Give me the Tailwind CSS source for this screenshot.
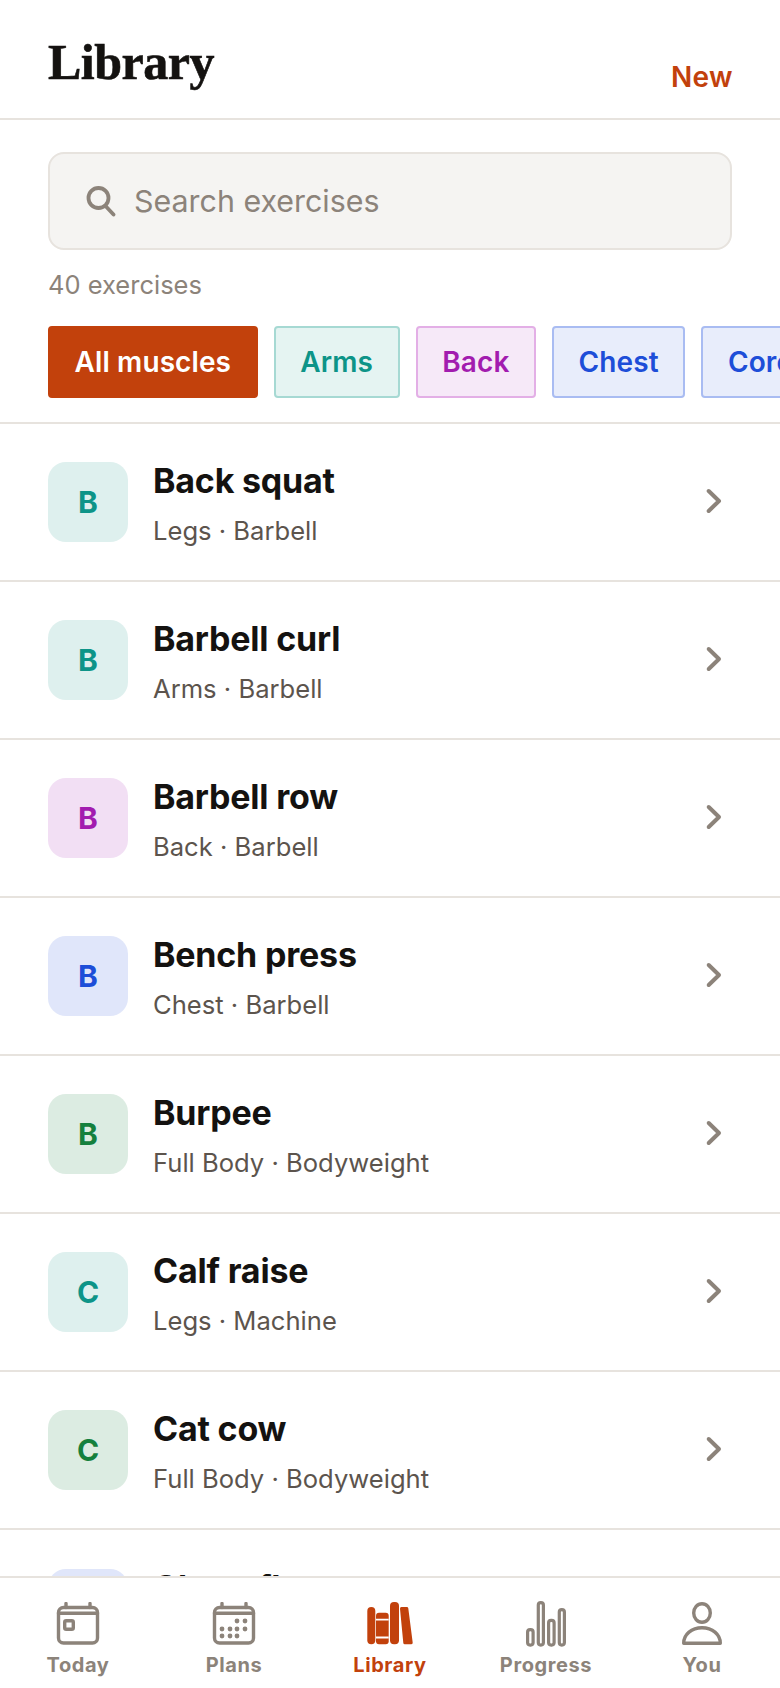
<!DOCTYPE html>
<html lang="en">
<head>
    <meta charset="UTF-8">
    <title>Library</title>
    <script src="https://cdn.jsdelivr.net/npm/@tailwindcss/browser@4"></script>
</head>
<body class="bg-white font-['Inter',sans-serif]">
    <div class="relative w-[780px] h-[1688px] overflow-hidden flex flex-col">
        <!-- header -->
        <header class="h-[120px] shrink-0 flex justify-between items-start px-12 border-b-2 border-[#e7e3de]">
            <h1 class="mt-[30px] font-['Liberation_Serif',serif] font-bold text-[50px] leading-[64px] tracking-[-0.5px] [-webkit-text-stroke:0.6px_#141210] text-[#141210]">Library</h1>
            <button class="mt-[59px] -mr-[1px] font-semibold text-[28px] leading-[36px] tracking-[0.4px] text-[#c2410c]">New</button>
        </header>

        <!-- search -->
        <div class="px-12 pt-8 shrink-0">
            <div class="h-[98px] flex items-center gap-[17px] pl-[35px] rounded-[16px] border-2 border-[#e7e3de] bg-[#f5f4f2]">
                <svg class="w-[32px] h-[32px] text-[#8c837a]" viewBox="0 0 32 32" fill="none" stroke="currentColor" stroke-width="3.800" stroke-linecap="round"><circle cx="13.500" cy="13" r="10"/><path d="M21 21.500l7.500 8"/></svg>
                <span class="text-[30.4px] pt-[1px] text-[#8c837a]">Search exercises</span>
            </div>
            <p class="mt-[18px] text-[25.5px] leading-[34px] text-[#8c837a]">40 exercises</p>
        </div>

        <!-- muscle chips -->
        <div class="flex gap-4 pl-12 mt-[24px] shrink-0 overflow-hidden">
            <span class="h-[72px] px-[24.6px] flex items-center shrink-0 rounded-[4px] border-2 border-[#c2410c] bg-[#c2410c] text-white font-semibold text-[28px] tracking-[0.1px]">All muscles</span>
            <span class="h-[72px] px-[24.6px] flex items-center shrink-0 rounded-[4px] border-2 border-[#a6d9d3] bg-[#e5f4f2] text-[#0d9488] font-semibold text-[28px] tracking-[0.1px]">Arms</span>
            <span class="h-[72px] px-[24.6px] flex items-center shrink-0 rounded-[4px] border-2 border-[#e3afe6] bg-[#f6e9f8] text-[#a21caf] font-semibold text-[28px] tracking-[0.1px]">Back</span>
            <span class="h-[72px] px-[24.6px] flex items-center shrink-0 rounded-[4px] border-2 border-[#a9bcf2] bg-[#e8edfb] text-[#1d4ed8] font-semibold text-[28px] tracking-[0.1px]">Chest</span>
            <span class="h-[72px] px-[24.6px] flex items-center shrink-0 rounded-[4px] border-2 border-[#a9bcf2] bg-[#e8edfb] text-[#1d4ed8] font-semibold text-[28px] tracking-[0.1px]">Core</span>
        </div>

        <!-- exercise list -->
        <ul class="mt-[24px] border-t-2 border-[#e7e3de]">
            <li class="h-[158px] flex items-center pl-12 pr-[56px] border-b-2 border-[#e7e3de]">
                <div class="w-20 h-20 shrink-0 flex items-center justify-center rounded-[18px] bg-[#def0ee] text-[#0d9488] font-bold text-[30px]">B</div>
                <div class="ml-[25px] flex-1 pt-[4px]">
                    <div class="-mt-[2px] font-[650] text-[34px] leading-[44px] tracking-[-0.2px] text-[#141210]">Back squat</div>
                    <div class="mt-[11px] text-[25.6px] leading-[34px] text-[#5c544d]">Legs · Barbell</div>
                </div>
                <svg class="w-5 h-7 text-[#8c837a]" viewBox="0 0 20 28" fill="none" stroke="currentColor" stroke-width="4" stroke-linecap="round" stroke-linejoin="round"><path d="M4.700 3l10.300 10L4.700 23"/></svg>
            </li>
            <li class="h-[158px] flex items-center pl-12 pr-[56px] border-b-2 border-[#e7e3de]">
                <div class="w-20 h-20 shrink-0 flex items-center justify-center rounded-[18px] bg-[#def0ee] text-[#0d9488] font-bold text-[30px]">B</div>
                <div class="ml-[25px] flex-1 pt-[4px]">
                    <div class="-mt-[2px] font-[650] text-[34px] leading-[44px] tracking-[-0.2px] text-[#141210]">Barbell curl</div>
                    <div class="mt-[11px] text-[25.6px] leading-[34px] text-[#5c544d]">Arms · Barbell</div>
                </div>
                <svg class="w-5 h-7 text-[#8c837a]" viewBox="0 0 20 28" fill="none" stroke="currentColor" stroke-width="4" stroke-linecap="round" stroke-linejoin="round"><path d="M4.700 3l10.300 10L4.700 23"/></svg>
            </li>
            <li class="h-[158px] flex items-center pl-12 pr-[56px] border-b-2 border-[#e7e3de]">
                <div class="w-20 h-20 shrink-0 flex items-center justify-center rounded-[18px] bg-[#f2dff4] text-[#a21caf] font-bold text-[30px]">B</div>
                <div class="ml-[25px] flex-1 pt-[4px]">
                    <div class="-mt-[2px] font-[650] text-[34px] leading-[44px] tracking-[-0.2px] text-[#141210]">Barbell row</div>
                    <div class="mt-[11px] text-[25.6px] leading-[34px] text-[#5c544d]">Back · Barbell</div>
                </div>
                <svg class="w-5 h-7 text-[#8c837a]" viewBox="0 0 20 28" fill="none" stroke="currentColor" stroke-width="4" stroke-linecap="round" stroke-linejoin="round"><path d="M4.700 3l10.300 10L4.700 23"/></svg>
            </li>
            <li class="h-[158px] flex items-center pl-12 pr-[56px] border-b-2 border-[#e7e3de]">
                <div class="w-20 h-20 shrink-0 flex items-center justify-center rounded-[18px] bg-[#e0e6fa] text-[#1d4ed8] font-bold text-[30px]">B</div>
                <div class="ml-[25px] flex-1 pt-[4px]">
                    <div class="-mt-[2px] font-[650] text-[34px] leading-[44px] tracking-[-0.2px] text-[#141210]">Bench press</div>
                    <div class="mt-[11px] text-[25.6px] leading-[34px] text-[#5c544d]">Chest · Barbell</div>
                </div>
                <svg class="w-5 h-7 text-[#8c837a]" viewBox="0 0 20 28" fill="none" stroke="currentColor" stroke-width="4" stroke-linecap="round" stroke-linejoin="round"><path d="M4.700 3l10.300 10L4.700 23"/></svg>
            </li>
            <li class="h-[158px] flex items-center pl-12 pr-[56px] border-b-2 border-[#e7e3de]">
                <div class="w-20 h-20 shrink-0 flex items-center justify-center rounded-[18px] bg-[#dcece2] text-[#15803d] font-bold text-[30px]">B</div>
                <div class="ml-[25px] flex-1 pt-[4px]">
                    <div class="-mt-[2px] font-[650] text-[34px] leading-[44px] tracking-[-0.2px] text-[#141210]">Burpee</div>
                    <div class="mt-[11px] text-[25.6px] leading-[34px] text-[#5c544d]">Full Body · Bodyweight</div>
                </div>
                <svg class="w-5 h-7 text-[#8c837a]" viewBox="0 0 20 28" fill="none" stroke="currentColor" stroke-width="4" stroke-linecap="round" stroke-linejoin="round"><path d="M4.700 3l10.300 10L4.700 23"/></svg>
            </li>
            <li class="h-[158px] flex items-center pl-12 pr-[56px] border-b-2 border-[#e7e3de]">
                <div class="w-20 h-20 shrink-0 flex items-center justify-center rounded-[18px] bg-[#def0ee] text-[#0d9488] font-bold text-[30px]">C</div>
                <div class="ml-[25px] flex-1 pt-[4px]">
                    <div class="-mt-[2px] font-[650] text-[34px] leading-[44px] tracking-[-0.2px] text-[#141210]">Calf raise</div>
                    <div class="mt-[11px] text-[25.6px] leading-[34px] text-[#5c544d]">Legs · Machine</div>
                </div>
                <svg class="w-5 h-7 text-[#8c837a]" viewBox="0 0 20 28" fill="none" stroke="currentColor" stroke-width="4" stroke-linecap="round" stroke-linejoin="round"><path d="M4.700 3l10.300 10L4.700 23"/></svg>
            </li>
            <li class="h-[158px] flex items-center pl-12 pr-[56px] border-b-2 border-[#e7e3de]">
                <div class="w-20 h-20 shrink-0 flex items-center justify-center rounded-[18px] bg-[#dcece2] text-[#15803d] font-bold text-[30px]">C</div>
                <div class="ml-[25px] flex-1 pt-[4px]">
                    <div class="-mt-[2px] font-[650] text-[34px] leading-[44px] tracking-[-0.2px] text-[#141210]">Cat cow</div>
                    <div class="mt-[11px] text-[25.6px] leading-[34px] text-[#5c544d]">Full Body · Bodyweight</div>
                </div>
                <svg class="w-5 h-7 text-[#8c837a]" viewBox="0 0 20 28" fill="none" stroke="currentColor" stroke-width="4" stroke-linecap="round" stroke-linejoin="round"><path d="M4.700 3l10.300 10L4.700 23"/></svg>
            </li>
            <li class="h-[158px] flex items-center pl-12 pr-[56px]">
                <div class="w-20 h-20 shrink-0 flex items-center justify-center rounded-[18px] bg-[#e0e6fa] text-[#1d4ed8] font-bold text-[30px]">C</div>
                <div class="ml-[25px] flex-1 pt-[4px]">
                    <div class="-mt-[2px] font-[650] text-[34px] leading-[44px] tracking-[-0.2px] text-[#141210]">Chest fly</div>
                    <div class="mt-[11px] text-[25.6px] leading-[34px] text-[#5c544d]">Chest · Dumbbell</div>
                </div>
            </li>
        </ul>

        <!-- tab bar -->
        <nav class="absolute bottom-0 left-0 right-0 h-[112px] grid grid-cols-5 bg-white border-t-2 border-[#e7e3de] text-[#8c837a]">
            <div class="flex flex-col items-center pt-[24px]">
                <svg class="w-[44px] h-[44px]" viewBox="0 0 44 44" fill="none" stroke="currentColor" stroke-width="3.400" stroke-linecap="round" stroke-linejoin="round"><rect x="2.500" y="5.500" width="39" height="35.500" rx="5"/><path d="M2.500 11.300h39M10 1.500v4M34 1.500v4"/><rect x="8.700" y="18.700" width="8.600" height="8.600" rx="1.500"/></svg>
                <span class="mt-[6px] font-bold text-[20px] leading-[26px] tracking-[0.6px]">Today</span>
            </div>
            <div class="flex flex-col items-center pt-[24px]">
                <svg class="w-[44px] h-[44px]" viewBox="0 0 44 44" fill="none" stroke="currentColor" stroke-width="3.400" stroke-linecap="round" stroke-linejoin="round"><rect x="2.500" y="5.500" width="39" height="35.500" rx="5"/><path d="M2.500 11.300h39M10 1.500v4M34 1.500v4"/><g fill="currentColor" stroke="none"><circle cx="25" cy="19" r="2.400"/><circle cx="33" cy="19" r="2.400"/><circle cx="10" cy="27" r="2.400"/><circle cx="18" cy="27" r="2.400"/><circle cx="25" cy="27" r="2.400"/><circle cx="33" cy="27" r="2.400"/><circle cx="10" cy="34" r="2.400"/><circle cx="18" cy="34" r="2.400"/><circle cx="25" cy="34" r="2.400"/></g></svg>
                <span class="mt-[6px] font-bold text-[20px] leading-[26px] tracking-[0.6px]">Plans</span>
            </div>
            <div class="flex flex-col items-center pt-[24px] text-[#c2410c]">
                <svg class="w-[48px] h-[44px]" viewBox="0 0 48 44" fill="currentColor"><rect x="1.300" y="5" width="8" height="37.300" rx="4"/><rect x="10" y="10.700" width="12.700" height="31.600" rx="3"/><rect x="24" y="0" width="9" height="42.300" rx="4"/><path d="M35.500 6.500h5.300l4.400 34.300h-6.400z" stroke="currentColor" stroke-width="3" stroke-linejoin="round"/><path d="M10 17.700h12.700M10 35.500h12.700" stroke="white" stroke-width="1.800" fill="none"/></svg>
                <span class="mt-[6px] font-bold text-[20px] leading-[26px] tracking-[0.6px]">Library</span>
            </div>
            <div class="flex flex-col items-center pt-[23px]">
                <svg class="w-[42px] h-[47px]" viewBox="0 0 42 47" fill="none" stroke="currentColor" stroke-width="3.200" stroke-linejoin="round"><rect x="2.600" y="28.600" width="5.500" height="15.500" rx="2.500"/><rect x="13.300" y="1.600" width="5.100" height="42.500" rx="2.500"/><rect x="23.600" y="19.300" width="5.500" height="24.800" rx="2.500"/><rect x="34.300" y="8.600" width="5.100" height="35.500" rx="2.500"/></svg>
                <span class="mt-[4px] font-bold text-[20px] leading-[26px] tracking-[0.6px]">Progress</span>
            </div>
            <div class="flex flex-col items-center pt-[24px]">
                <svg class="w-[42px] h-[44px]" viewBox="0 0 42 44" fill="none" stroke="currentColor" stroke-width="3.400" stroke-linejoin="round"><ellipse cx="21" cy="11" rx="8.300" ry="9.300"/><path d="M2.700 41.300c0-9 8-15.600 18.300-15.600s18.300 6.600 18.300 15.600z"/></svg>
                <span class="mt-[6px] font-bold text-[20px] leading-[26px] tracking-[0.6px]">You</span>
            </div>
        </nav>
    </div>
</body>
</html>
